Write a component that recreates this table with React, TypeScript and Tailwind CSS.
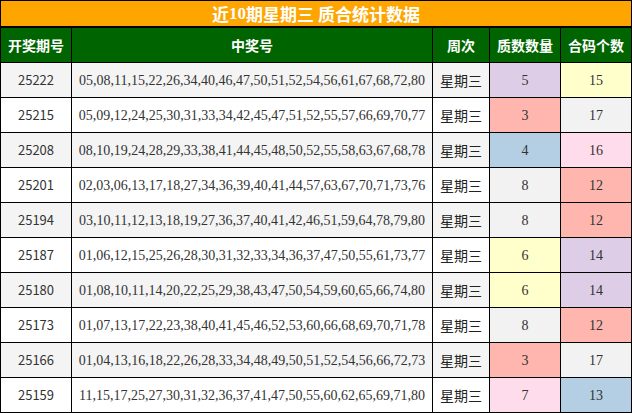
import React from 'react';

type Row = {
  issue: string;
  nums: string;
  primes: number;
  composites: number;
};

const rows: Row[] = [
  { issue: '25222', nums: '05,08,11,15,22,26,34,40,46,47,50,51,52,54,56,61,67,68,72,80', primes: 5, composites: 15 },
  { issue: '25215', nums: '05,09,12,24,25,30,31,33,34,42,45,47,51,52,55,57,66,69,70,77', primes: 3, composites: 17 },
  { issue: '25208', nums: '08,10,19,24,28,29,33,38,41,44,45,48,50,52,55,58,63,67,68,78', primes: 4, composites: 16 },
  { issue: '25201', nums: '02,03,06,13,17,18,27,34,36,39,40,41,44,57,63,67,70,71,73,76', primes: 8, composites: 12 },
  { issue: '25194', nums: '03,10,11,12,13,18,19,27,36,37,40,41,42,46,51,59,64,78,79,80', primes: 8, composites: 12 },
  { issue: '25187', nums: '01,06,12,15,25,26,28,30,31,32,33,34,36,37,47,50,55,61,73,77', primes: 6, composites: 14 },
  { issue: '25180', nums: '01,08,10,11,14,20,22,25,29,38,43,47,50,54,59,60,65,66,74,80', primes: 6, composites: 14 },
  { issue: '25173', nums: '01,07,13,17,22,23,38,40,41,45,46,52,53,60,66,68,69,70,71,78', primes: 8, composites: 12 },
  { issue: '25166', nums: '01,04,13,16,18,22,26,28,33,34,48,49,50,51,52,54,56,66,72,73', primes: 3, composites: 17 },
  { issue: '25159', nums: '11,15,17,25,27,30,31,32,36,37,41,47,50,55,60,62,65,69,71,80', primes: 7, composites: 13 },
];

// colour per count, prime column uses 3..8, composite column uses 12..17
const countBg: Record<number, string> = {
  3: 'bg-[#ffb6ae]',
  4: 'bg-[#b4cfe4]',
  5: 'bg-[#decde6]',
  6: 'bg-[#ffffcc]',
  7: 'bg-[#ffdcec]',
  8: 'bg-[#f2f2f2]',
  12: 'bg-[#ffb6ae]',
  13: 'bg-[#b4cfe4]',
  14: 'bg-[#decde6]',
  15: 'bg-[#ffffcc]',
  16: 'bg-[#ffdcec]',
  17: 'bg-[#f2f2f2]',
};

const sans = "font-['Noto_Sans_CJK_SC','Noto_Sans',sans-serif]";
const serif = "font-['Liberation_Serif','Noto_Sans_CJK_SC',serif]";
const cell = 'flex items-center justify-center border-r border-b border-black';

export default function App() {
  return (
    <div className="w-[632px] bg-white">
      <div className="grid grid-cols-[71px_361px_57px_71px_71px] border-l border-t border-black text-[#333]">
        <div className={`col-span-5 flex h-[27px] items-center justify-center border-r border-b-2 border-black bg-[#ffa500] text-[17px] font-bold text-white ${sans}`}>
          近<span className={serif}>10</span>期星期三 质合统计数据
        </div>

        {['开奖期号', '中奖号', '周次', '质数数量', '合码个数'].map((h) => (
          <div key={h} className={`${cell} h-[35px] bg-[#006400] text-[14px] font-bold text-white ${sans}`}>
            {h}
          </div>
        ))}

        {rows.map((r, i) => {
          const rowBg = i % 2 === 0 ? 'bg-[#f4f4f4]' : 'bg-white';
          return (
            <React.Fragment key={r.issue}>
              <div className={`${cell} h-[35px] ${rowBg} text-[13px] ${sans}`}>{r.issue}</div>
              <div className={`${cell} h-[35px] ${rowBg} text-[14px] ${serif}`}>{r.nums}</div>
              <div className={`${cell} h-[35px] ${rowBg} text-[14px] text-[#222] ${sans}`}>星期三</div>
              <div className={`${cell} h-[35px] ${countBg[r.primes]} text-[14px] ${serif}`}>{r.primes}</div>
              <div className={`${cell} h-[35px] ${countBg[r.composites]} text-[14px] ${serif}`}>{r.composites}</div>
            </React.Fragment>
          );
        })}
      </div>
    </div>
  );
}
